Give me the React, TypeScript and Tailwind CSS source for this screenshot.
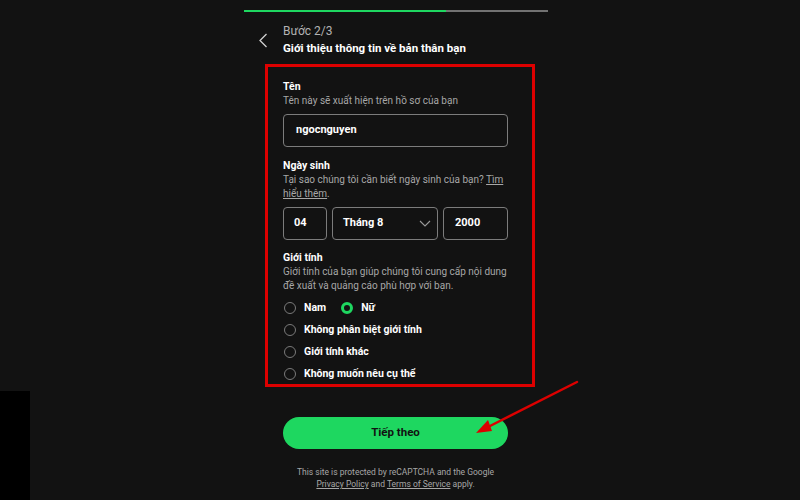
import React from "react";

const font = { fontFamily: "Roboto, 'Noto Sans', sans-serif" };

function Radio({ checked, label }: { checked?: boolean; label: string }) {
  return (
    <div className="flex items-center gap-[8px]">
      {checked ? (
        <span className="w-[12px] h-[12px] rounded-full border-[3px] border-[#1ed760] bg-[#121212]" />
      ) : (
        <span className="w-[12px] h-[12px] rounded-full border border-[#7a7a7a]" />
      )}
      <span className="text-[10.5px] font-bold text-white">{label}</span>
    </div>
  );
}

export default function App() {
  return (
    <div
      className="relative w-[800px] h-[500px] bg-[#121212] overflow-hidden text-white"
      style={font}
    >
      <div className="ml-[244px] w-[304px] pt-[10px]">
        {/* step progress */}
        <div className="h-[2px] bg-[#727272] flex">
          <div className="w-[202px] h-full bg-[#1ed760]" />
        </div>

        {/* header */}
        <div className="flex mt-[10px]">
          <div className="w-[39px] flex items-start pt-[11px] pl-[14px]">
            <svg width="10" height="15" viewBox="0 0 10 15" fill="none">
              <path d="M8.5 1 L2 7.5 L8.5 14" stroke="#d0d0d0" strokeWidth="1.3" />
            </svg>
          </div>
          <div>
            <div className="text-[12px] leading-[18px] text-[#b3b3b3]">Bước 2/3</div>
            <div className="text-[11.5px] leading-[16px] font-bold">
              Giới thiệu thông tin về bản thân bạn
            </div>
          </div>
        </div>

        {/* form */}
        <div className="ml-[39px] w-[225px] mt-[24px]">
          <div className="text-[10.5px] leading-[14px] font-bold">Tên</div>
          <div className="text-[10px] leading-[14px] text-[#a7a7a7]">
            Tên này sẽ xuất hiện trên hồ sơ của bạn
          </div>
          <div className="mt-[6px] h-[33px] rounded-[4px] border border-[#7c7c7c] flex items-center pl-[12px] text-[11px] font-bold">
            ngocnguyen
          </div>

          <div className="mt-[12px] text-[10.5px] leading-[14px] font-bold">Ngày sinh</div>
          <div className="text-[10px] leading-[14px] text-[#a7a7a7]">
            Tại sao chúng tôi cần biết ngày sinh của bạn?{" "}
            <span className="underline">Tìm hiểu thêm</span>.
          </div>
          <div className="mt-[6px] flex gap-[5px] h-[33px]">
            <div className="w-[44px] rounded-[4px] border border-[#7c7c7c] flex items-center pl-[10px] text-[11px] font-bold">
              04
            </div>
            <div className="w-[106px] rounded-[4px] border border-[#7c7c7c] flex items-center justify-between pl-[10px] pr-[6px] text-[11px] font-bold">
              <span>Tháng 8</span>
              <svg width="12" height="7" viewBox="0 0 12 7" fill="none">
                <path d="M1 1 L6 6 L11 1" stroke="#9a9a9a" strokeWidth="1.1" />
              </svg>
            </div>
            <div className="flex-1 rounded-[4px] border border-[#7c7c7c] flex items-center pl-[11px] text-[11px] font-bold">
              2000
            </div>
          </div>

          <div className="mt-[11px] text-[10.5px] leading-[14px] font-bold">Giới tính</div>
          <div className="text-[10px] leading-[14px] text-[#a7a7a7] -mr-[8px]">
            Giới tính của bạn giúp chúng tôi cung cấp nội dung đề xuất và quảng cáo phù hợp với bạn.
          </div>
          <div className="mt-[4px] pl-[1px]">
            <div className="h-[22px] flex items-center gap-[15px]">
              <Radio label="Nam" />
              <Radio checked label="Nữ" />
            </div>
            <div className="h-[22px] flex items-center">
              <Radio label="Không phân biệt giới tính" />
            </div>
            <div className="h-[22px] flex items-center">
              <Radio label="Giới tính khác" />
            </div>
            <div className="h-[22px] flex items-center">
              <Radio label="Không muốn nêu cụ thể" />
            </div>
          </div>

          <div className="mt-[32px] h-[32px] rounded-full bg-[#1ed760] flex items-center justify-center text-[11.5px] font-bold text-[#121212]">
            Tiếp theo
          </div>

          <div className="mt-[17px] text-center text-[8.5px] leading-[12px] text-[#a7a7a7] whitespace-nowrap -mx-[20px]">
            <div>This site is protected by reCAPTCHA and the Google</div>
            <div>
              <span className="underline">Privacy Policy</span> and{" "}
              <span className="underline">Terms of Service</span> apply.
            </div>
          </div>
        </div>
      </div>

      {/* highlight frame around the form */}
      <div className="absolute left-[265px] top-[64px] w-[270px] h-[323px] border-[3px] border-[#dd0000]" />

      {/* pointer arrow toward the button */}
      <svg className="absolute left-0 top-0" width="800" height="500" viewBox="0 0 800 500" fill="none">
        <line x1="577" y1="382" x2="486" y2="428" stroke="#dd0000" strokeWidth="2.5" strokeLinecap="round" />
        <path d="M476 433 L488 420 L492 431 Z" fill="#dd0000" />
      </svg>

      {/* dark block in the lower-left corner */}
      <div className="absolute left-0 top-[391px] w-[30px] h-[109px] bg-black" />
    </div>
  );
}
